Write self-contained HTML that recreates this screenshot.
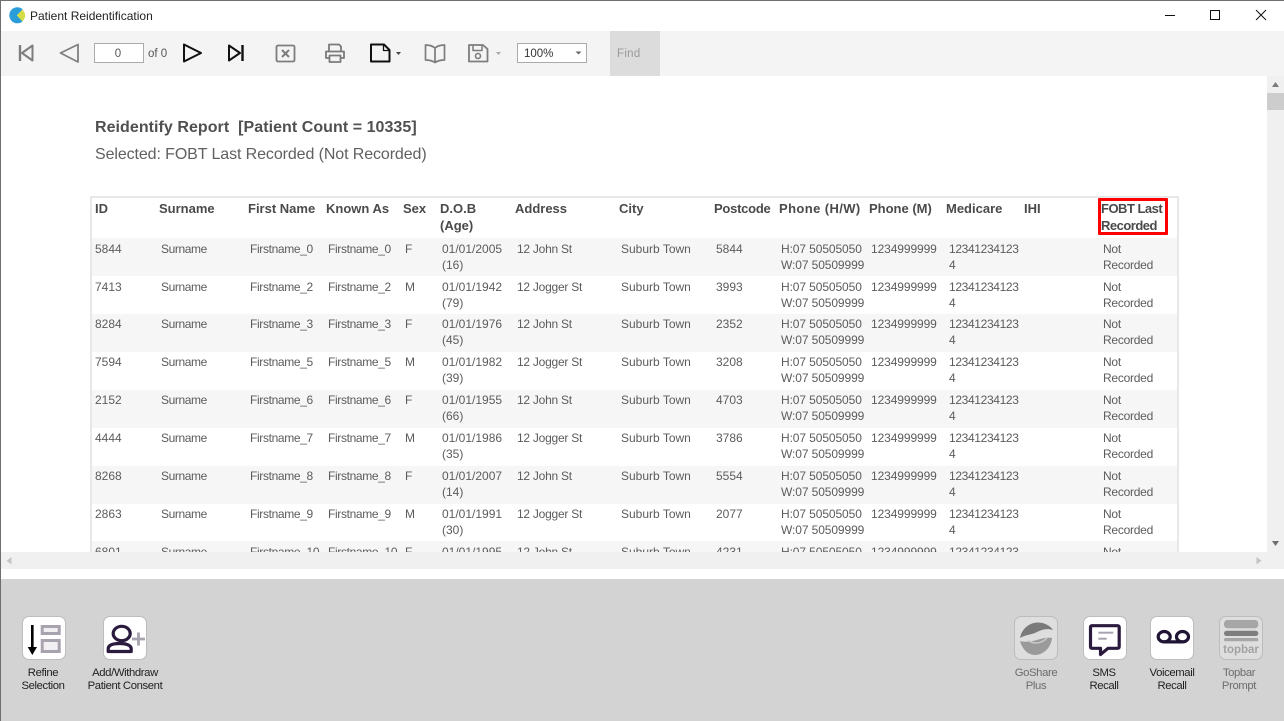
<!DOCTYPE html>
<html><head><meta charset="utf-8"><title>Patient Reidentification</title>
<style>
html,body{margin:0;padding:0;width:1284px;height:721px;overflow:hidden;background:#fff}
body{position:relative;font-family:"Liberation Sans",sans-serif;color:#555}
div,span,svg{position:absolute}
span{white-space:nowrap}
.clip{left:0;top:76px;width:1267px;height:476px;overflow:hidden;background:#fff}
.h{font-weight:bold;font-size:13px;line-height:17px;color:#4a4a4a}
.r{left:0;width:1267px;height:38px}
.r.o{background:#f6f6f6}
.r span{font-size:12px;line-height:16px;color:#5c5c5c;top:3px}
.a{left:95px}.b{left:161px;letter-spacing:-.4px}.c{left:250px;letter-spacing:-.35px}.d{left:328px;letter-spacing:-.35px}.e{left:405px}.f{left:442px}.g{left:517px;letter-spacing:-.25px}.i{left:621px}.j{left:716px}.k{left:781px;letter-spacing:-.1px}.l{left:871px;letter-spacing:-.1px}.m{left:949px;letter-spacing:-.35px}.n{left:1103px;letter-spacing:-.25px}
.btn{width:42px;height:42px;top:616px;background:#fff;border:1px solid #bdbdbd;border-radius:7px;box-sizing:content-box}
.btn.dis{background:#dedede}
.lb{font-size:11.3px;line-height:13px;color:#222;text-align:center;top:667px;white-space:nowrap;letter-spacing:-.38px}
.lb.dis{color:#6c6c6c}
</style></head><body>
<div style="left:0;top:0;width:1284px;height:1px;background:#707070"></div>
<svg style="left:8px;top:7px" width="18" height="18" viewBox="0 0 18 18"><circle cx="9.300" cy="8.300" r="8" fill="#2a9dd8"/><path d="M9 8.300L18 -1V18Z" fill="#fff"/><path d="M8.800 8.500L14.300 2.800C16.200 4.500 17.200 6.300 17.200 8.500C17.200 10.800 16.200 12.600 14.300 14.300Z" fill="#d6dc45"/></svg>
<span style="left:30px;top:9px;font-size:12px;line-height:14px;color:#222">Patient Reidentification</span>
<svg style="left:1160px;top:5px" width="112" height="20" viewBox="0 0 112 20" fill="none" stroke="#111"><path d="M5 10.500H15"/><rect x="50.500" y="5.500" width="9" height="9"/><path d="M96 5L106 15M106 5L96 15"/></svg>

<div style="left:1px;top:31px;width:1283px;height:45px;background:#f4f4f4"></div>
<svg style="left:0;top:31px" width="610" height="45" viewBox="0 31 610 45" fill="none" stroke-linejoin="round">
<path d="M20 45V61" stroke="#7d7d7d" stroke-width="2.400"/><path d="M32.500 45.500V60.500L22 53Z" stroke="#7d7d7d" stroke-width="2"/>
<path d="M78 44.500V62L60.500 53Z" stroke="#808080" stroke-width="1.800"/>
<path d="M184 44.500V61.500L201 53Z" stroke="#111" stroke-width="2"/>
<path d="M229 45.500V60.500L240 53Z" stroke="#111" stroke-width="2"/><path d="M242.500 45V61" stroke="#111" stroke-width="2.400"/>
<rect x="276.500" y="45.500" width="18" height="16" rx="1.500" stroke="#7d7d7d" stroke-width="1.800"/><path d="M282 50L289 57M289 50L282 57" stroke="#7d7d7d" stroke-width="2"/>
<path d="M329 51V44.500H339L341 46.500V51M329 58H326V51.500H344V58H341M329.500 55.500H340.500V62H329.500Z" stroke="#7a7a7a" stroke-width="1.800"/>
<path d="M371 44.500H384L389.500 50V61.500H371Z" stroke="#111" stroke-width="2"/><path d="M383.500 44.500V50.500H389.500" stroke="#111" stroke-width="1.300"/>
<path d="M396 52H401L398.500 55Z" fill="#444"/>
<path d="M435 48C432 45.500 429 45 425.500 45V60C429 60 432 60.500 435 62.500C438 60.500 441 60 444.500 60V45C441 45 438 45.500 435 48V62" stroke="#7d7d7d" stroke-width="1.700"/>
<path d="M469 45H483L487.500 49V61.500H469Z" stroke="#7d7d7d" stroke-width="1.800"/><path d="M473 45.500V50.500H482V45.500" stroke="#7d7d7d" stroke-width="1.500"/><circle cx="478" cy="56" r="2.500" stroke="#7d7d7d" stroke-width="1.600"/>
<path d="M496 52H501L498.500 55Z" fill="#a8a8a8"/>
</svg>
<div style="left:94px;top:43px;width:48px;height:18px;background:#fff;border:1px solid #ababab"></div>
<span style="left:93px;top:47px;width:50px;text-align:center;font-size:11.500px;line-height:14px;color:#555">0</span>
<span style="left:148px;top:47px;font-size:11.500px;line-height:14px;color:#555">of 0</span>
<div style="left:517px;top:43px;width:68px;height:18px;background:#fff;border:1px solid #ababab"></div>
<span style="left:524px;top:47px;font-size:11.500px;line-height:14px;color:#333">100%</span>
<svg style="left:574px;top:50px" width="10" height="6"><path d="M1.500 1.500H7.500L4.500 4.500Z" fill="#666"/></svg>
<div style="left:610px;top:31px;width:50px;height:45px;background:#dcdcdc"></div>
<span style="left:617px;top:47px;font-size:11.500px;line-height:14px;color:#9a9a9a;letter-spacing:.3px">Find</span>

<div class="clip">
<span style="left:95px;top:43px;font-size:16px;font-weight:bold;line-height:18px;color:#505050;white-space:pre;letter-spacing:.05px">Reidentify Report  [Patient Count = 10335]</span>
<span style="left:95px;top:69px;font-size:16px;line-height:20px;color:#606060;letter-spacing:-.1px">Selected: FOBT Last Recorded (Not Recorded)</span>
<div style="left:90px;top:120px;width:1085px;height:400px;border:2px solid #e8e8e8;border-bottom:0"></div>
<div style="left:92px;top:162px;width:1085px;height:314px;overflow:hidden">
<div style="left:-92px;top:0;width:1267px;height:320px">
<div class="r o" style="top:0"><span class="a">5844</span><span class="b">Surname</span><span class="c">Firstname_0</span><span class="d">Firstname_0</span><span class="e">F</span><span class="f">01/01/2005<br>(16)</span><span class="g">12 John St</span><span class="i">Suburb Town</span><span class="j">5844</span><span class="k">H:07 50505050<br>W:07 50509999</span><span class="l">1234999999</span><span class="m">12341234123<br>4</span><span class="n">Not<br>Recorded</span></div>
<div class="r" style="top:38px"><span class="a">7413</span><span class="b">Surname</span><span class="c">Firstname_2</span><span class="d">Firstname_2</span><span class="e">M</span><span class="f">01/01/1942<br>(79)</span><span class="g">12 Jogger St</span><span class="i">Suburb Town</span><span class="j">3993</span><span class="k">H:07 50505050<br>W:07 50509999</span><span class="l">1234999999</span><span class="m">12341234123<br>4</span><span class="n">Not<br>Recorded</span></div>
<div class="r o" style="top:76px"><span class="a" style="top:2px">8284</span><span class="b" style="top:2px">Surname</span><span class="c" style="top:2px">Firstname_3</span><span class="d" style="top:2px">Firstname_3</span><span class="e" style="top:2px">F</span><span class="f" style="top:2px">01/01/1976<br>(45)</span><span class="g" style="top:2px">12 John St</span><span class="i" style="top:2px">Suburb Town</span><span class="j" style="top:2px">2352</span><span class="k" style="top:2px">H:07 50505050<br>W:07 50509999</span><span class="l" style="top:2px">1234999999</span><span class="m" style="top:2px">12341234123<br>4</span><span class="n" style="top:2px">Not<br>Recorded</span></div>
<div class="r" style="top:114px"><span class="a" style="top:2px">7594</span><span class="b" style="top:2px">Surname</span><span class="c" style="top:2px">Firstname_5</span><span class="d" style="top:2px">Firstname_5</span><span class="e" style="top:2px">M</span><span class="f" style="top:2px">01/01/1982<br>(39)</span><span class="g" style="top:2px">12 Jogger St</span><span class="i" style="top:2px">Suburb Town</span><span class="j" style="top:2px">3208</span><span class="k" style="top:2px">H:07 50505050<br>W:07 50509999</span><span class="l" style="top:2px">1234999999</span><span class="m" style="top:2px">12341234123<br>4</span><span class="n" style="top:2px">Not<br>Recorded</span></div>
<div class="r o" style="top:152px"><span class="a" style="top:2px">2152</span><span class="b" style="top:2px">Surname</span><span class="c" style="top:2px">Firstname_6</span><span class="d" style="top:2px">Firstname_6</span><span class="e" style="top:2px">F</span><span class="f" style="top:2px">01/01/1955<br>(66)</span><span class="g" style="top:2px">12 John St</span><span class="i" style="top:2px">Suburb Town</span><span class="j" style="top:2px">4703</span><span class="k" style="top:2px">H:07 50505050<br>W:07 50509999</span><span class="l" style="top:2px">1234999999</span><span class="m" style="top:2px">12341234123<br>4</span><span class="n" style="top:2px">Not<br>Recorded</span></div>
<div class="r" style="top:190px"><span class="a" style="top:2px">4444</span><span class="b" style="top:2px">Surname</span><span class="c" style="top:2px">Firstname_7</span><span class="d" style="top:2px">Firstname_7</span><span class="e" style="top:2px">M</span><span class="f" style="top:2px">01/01/1986<br>(35)</span><span class="g" style="top:2px">12 Jogger St</span><span class="i" style="top:2px">Suburb Town</span><span class="j" style="top:2px">3786</span><span class="k" style="top:2px">H:07 50505050<br>W:07 50509999</span><span class="l" style="top:2px">1234999999</span><span class="m" style="top:2px">12341234123<br>4</span><span class="n" style="top:2px">Not<br>Recorded</span></div>
<div class="r o" style="top:228px"><span class="a" style="top:2px">8268</span><span class="b" style="top:2px">Surname</span><span class="c" style="top:2px">Firstname_8</span><span class="d" style="top:2px">Firstname_8</span><span class="e" style="top:2px">F</span><span class="f" style="top:2px">01/01/2007<br>(14)</span><span class="g" style="top:2px">12 John St</span><span class="i" style="top:2px">Suburb Town</span><span class="j" style="top:2px">5554</span><span class="k" style="top:2px">H:07 50505050<br>W:07 50509999</span><span class="l" style="top:2px">1234999999</span><span class="m" style="top:2px">12341234123<br>4</span><span class="n" style="top:2px">Not<br>Recorded</span></div>
<div class="r" style="top:266px"><span class="a" style="top:2px">2863</span><span class="b" style="top:2px">Surname</span><span class="c" style="top:2px">Firstname_9</span><span class="d" style="top:2px">Firstname_9</span><span class="e" style="top:2px">M</span><span class="f" style="top:2px">01/01/1991<br>(30)</span><span class="g" style="top:2px">12 Jogger St</span><span class="i" style="top:2px">Suburb Town</span><span class="j" style="top:2px">2077</span><span class="k" style="top:2px">H:07 50505050<br>W:07 50509999</span><span class="l" style="top:2px">1234999999</span><span class="m" style="top:2px">12341234123<br>4</span><span class="n" style="top:2px">Not<br>Recorded</span></div>
<div class="r o" style="top:303px"><span class="a">6801</span><span class="b">Surname</span><span class="c">Firstname_10</span><span class="d">Firstname_10</span><span class="e">F</span><span class="f">01/01/1995</span><span class="g">12 John St</span><span class="i">Suburb Town</span><span class="j">4231</span><span class="k">H:07 50505050</span><span class="l">1234999999</span><span class="m">12341234123</span><span class="n">Not</span></div>
</div></div>
<span class="h" style="left:95px;top:124px">ID</span>
<span class="h" style="left:159px;top:124px">Surname</span>
<span class="h" style="left:248px;top:124px">First Name</span>
<span class="h" style="left:326px;top:124px">Known As</span>
<span class="h" style="left:403px;top:124px">Sex</span>
<span class="h" style="left:440px;top:124px">D.O.B<br>(Age)</span>
<span class="h" style="left:515px;top:124px">Address</span>
<span class="h" style="left:619px;top:124px">City</span>
<span class="h" style="left:714px;top:124px;letter-spacing:-.25px">Postcode</span>
<span class="h" style="left:779px;top:124px;letter-spacing:.4px">Phone (H/W)</span>
<span class="h" style="left:869px;top:124px">Phone (M)</span>
<span class="h" style="left:946px;top:124px">Medicare</span>
<span class="h" style="left:1024px;top:124px">IHI</span>
<span class="h" style="left:1101px;top:124px;letter-spacing:-.5px">FOBT Last<br>Recorded</span>
<div style="left:1098px;top:122px;width:64px;height:31px;border:3px solid #f00;border-radius:1px"></div>
</div>

<div style="left:1267px;top:76px;width:17px;height:476px;background:#f0f0f0"></div>
<div style="left:1267px;top:93px;width:17px;height:17px;background:#cdcdcd"></div>
<svg style="left:1267px;top:80px" width="17" height="8"><path d="M5 7L8.500 2L12 7Z" fill="#7a7a7a"/></svg>
<svg style="left:1267px;top:540px" width="17" height="8"><path d="M5 1H12L8.500 6Z" fill="#6e6e6e"/></svg>
<div style="left:0;top:552px;width:1284px;height:17px;background:#f0f0f0"></div>
<svg style="left:5px;top:556px" width="8" height="10"><path d="M6.500 1V8.500L1.500 4.800Z" fill="#c4c4c4"/></svg>
<svg style="left:1255px;top:556px" width="8" height="10"><path d="M1.500 1V8.500L6.500 4.800Z" fill="#c4c4c4"/></svg>
<div style="left:0;top:569px;width:1284px;height:10px;background:#fff"></div>
<div style="left:0;top:579px;width:1284px;height:142px;background:#d3d3d3"></div>
<div style="left:0;top:0;width:1px;height:721px;background:#6e6e6e"></div>

<div class="btn" style="left:22px"></div>
<svg style="left:22px;top:616px" width="44" height="44" viewBox="0 0 44 44"><path d="M10.300 9V33" stroke="#000" stroke-width="2.600"/><path d="M5.700 31H15L10.300 39Z" fill="#000"/><rect x="20.200" y="10.500" width="17" height="7" fill="#f1eff2" stroke="#a9a2af" stroke-width="3"/><rect x="20.200" y="24.500" width="17" height="11" fill="#f1eff2" stroke="#a9a2af" stroke-width="3"/></svg>
<div class="btn" style="left:103px"></div>
<svg style="left:103px;top:616px" width="44" height="44" viewBox="0 0 44 44" fill="none"><ellipse cx="18.700" cy="17.500" rx="8.500" ry="7.200" stroke="#2a1a3e" stroke-width="3.200"/><path d="M5.200 35.500V33C5.200 29.500 9 27.500 16.700 27.500C24 27.500 28.200 29.500 28.200 33V35.500Z" stroke="#2a1a3e" stroke-width="3.200" stroke-linejoin="round"/><path d="M35.500 16.500V29.500M29 23H42" stroke="#a9a2af" stroke-width="2.800"/></svg>
<span class="lb" style="left:13px;width:60px">Refine<br>Selection</span>
<span class="lb" style="left:80px;width:90px">Add/Withdraw<br>Patient Consent</span>

<div class="btn dis" style="left:1014px"></div>
<svg style="left:1014px;top:616px" width="44" height="44" viewBox="0 0 44 44"><path d="M6 22C8 12 16 6.500 24 6.500C30 6.500 36 9.500 39 14C33 12 27.500 13.500 22 16.500C17 19 12 18.500 6 22Z" fill="#7a7a7a"/><path d="M6 25C12 26.500 18 25.500 23 24C28 22.500 33 21 38 22C37 32 29 39 21 39C13 39 8 32 6 25Z" fill="#9a9a9a"/><path d="M14 24.500C21 29 28 27 33 22" fill="none" stroke="#c9c9c9" stroke-width="1.500"/></svg>
<div class="btn" style="left:1083px"></div>
<svg style="left:1083px;top:616px" width="44" height="44" viewBox="0 0 44 44" fill="none"><path d="M9 9.700H34.500C35.700 9.700 36.200 10.200 36.200 11.500V30.500C36.200 31.800 35.700 32.300 34.500 32.300H25L17.500 38.500V32.300H9C8 32.300 7.500 31.800 7.500 30.500V11.500C7.500 10.200 8 9.700 9 9.700Z" stroke="#2a1a3e" stroke-width="3.200" stroke-linejoin="round"/><path d="M15.300 16.700H30.300" stroke="#a9a2af" stroke-width="2"/><path d="M15.300 22.700H23.700" stroke="#a9a2af" stroke-width="2"/></svg>
<div class="btn" style="left:1150px"></div>
<svg style="left:1150px;top:616px" width="44" height="44" viewBox="0 0 44 44" fill="none" stroke="#1f1433" stroke-width="3.200"><ellipse cx="14.200" cy="20.700" rx="6" ry="5.200"/><ellipse cx="32.500" cy="20.700" rx="6" ry="5.200"/><path d="M14.200 25.900H32.500"/></svg>
<div class="btn dis" style="left:1219px"></div>
<svg style="left:1219px;top:616px" width="44" height="44" viewBox="0 0 44 44"><rect x="5" y="4" width="34.300" height="8.300" rx="3.500" fill="#a6a6a6"/><rect x="5" y="14.700" width="34.300" height="5.300" rx="2.600" fill="#7e7e7e"/><rect x="5" y="22" width="34.300" height="3.300" rx="1.600" fill="#a6a6a6"/><text x="22" y="37" text-anchor="middle" font-family="Liberation Sans,sans-serif" font-size="11.500" font-weight="bold" fill="#a2a2a2">topbar</text></svg>
<span class="lb dis" style="left:1006px;width:60px">GoShare<br>Plus</span>
<span class="lb" style="left:1074px;width:60px">SMS<br>Recall</span>
<span class="lb" style="left:1142px;width:60px">Voicemail<br>Recall</span>
<span class="lb dis" style="left:1209px;width:60px">Topbar<br>Prompt</span>
</body></html>
